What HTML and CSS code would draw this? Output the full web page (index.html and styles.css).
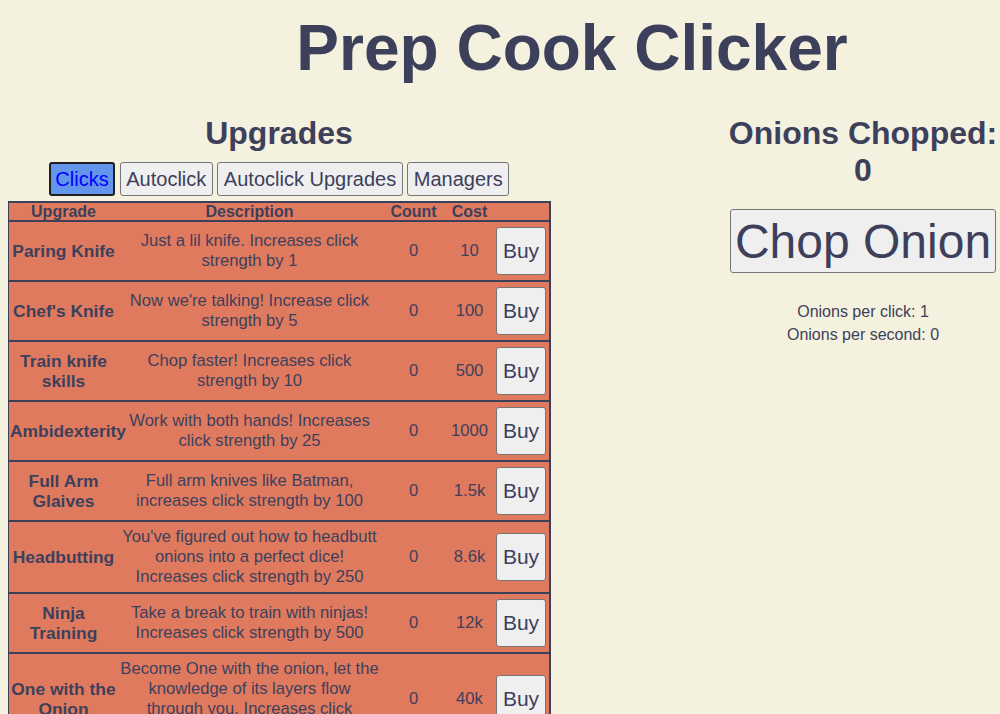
FILE: index.html
```html
<!DOCTYPE html>
<html lang="en">
<head>
<meta charset="utf-8">
<title>Prep Cook Clicker</title>
<link rel="stylesheet" href="styles.css">
</head>
<body>
<h1 class="title">Prep Cook Clicker</h1>
<div class="main">
  <section class="upgrades">
    <h2 class="heading">Upgrades</h2>
    <div class="tabs">
      <button class="tab active">Clicks</button>
      <button class="tab">Autoclick</button>
      <button class="tab">Autoclick Upgrades</button>
      <button class="tab">Managers</button>
    </div>
    <table class="table">
      <colgroup>
        <col class="c-name"><col class="c-desc"><col class="c-count"><col class="c-cost"><col class="c-buy">
      </colgroup>
      <thead>
        <tr><th>Upgrade</th><th>Description</th><th>Count</th><th>Cost</th><th></th></tr>
      </thead>
      <tbody>
        <tr><td class="name">Paring Knife</td><td class="desc">Just a lil knife. Increases click strength by 1</td><td class="num">0</td><td class="num">10</td><td class="buycell"><button class="buy">Buy</button></td></tr>
        <tr><td class="name">Chef's Knife</td><td class="desc">Now we're talking! Increase click strength by 5</td><td class="num">0</td><td class="num">100</td><td class="buycell"><button class="buy">Buy</button></td></tr>
        <tr><td class="name">Train knife skills</td><td class="desc">Chop faster! Increases click strength by 10</td><td class="num">0</td><td class="num">500</td><td class="buycell"><button class="buy">Buy</button></td></tr>
        <tr><td class="name">Ambidexterity</td><td class="desc">Work with both hands! Increases click strength by 25</td><td class="num">0</td><td class="num">1000</td><td class="buycell"><button class="buy">Buy</button></td></tr>
        <tr><td class="name">Full Arm Glaives</td><td class="desc">Full arm knives like Batman, increases click strength by 100</td><td class="num">0</td><td class="num">1.5k</td><td class="buycell"><button class="buy">Buy</button></td></tr>
        <tr><td class="name">Headbutting</td><td class="desc">You've figured out how to headbutt onions into a perfect dice! Increases click strength by 250</td><td class="num">0</td><td class="num">8.6k</td><td class="buycell"><button class="buy">Buy</button></td></tr>
        <tr><td class="name">Ninja Training</td><td class="desc">Take a break to train with ninjas! Increases click strength by 500</td><td class="num">0</td><td class="num">12k</td><td class="buycell"><button class="buy">Buy</button></td></tr>
        <tr><td class="name">One with the Onion</td><td class="desc">Become One with the onion, let the knowledge of its layers flow through you. Increases click strength by 1000</td><td class="num">0</td><td class="num">40k</td><td class="buycell"><button class="buy">Buy</button></td></tr>
      </tbody>
    </table>
  </section>
  <section class="clicker">
    <h2 class="heading">Onions Chopped: 0</h2>
    <button class="chop">Chop Onion</button>
    <div class="stats">
      <div>Onions per click: 1</div>
      <div>Onions per second: 0</div>
    </div>
  </section>
</div>
</body>
</html>
```
FILE: styles.css
```css
html, body {
  background: #f4f1de;
}
body {
  margin: 8px 0 8px 8px;
  color: #3d405b;
  font-family: "Liberation Sans", Arial, sans-serif;
  font-size: 16px;
}
.title {
  margin: 3px 0 0;
  padding-left: 136px;
  text-align: center;
  font-size: 64px;
  font-weight: bold;
}
.main {
  display: flex;
  justify-content: space-between;
  align-items: flex-start;
  padding-right: 2px;
}
.heading {
  margin: 30px 0 0;
  font-size: 32px;
  font-weight: bold;
  text-align: center;
}
.upgrades {
  width: 542px;
  display: flex;
  flex-direction: column;
}
.tabs {
  display: flex;
  justify-content: center;
  gap: 4.6px;
  margin-top: 10px;
}
.tab {
  font-family: inherit;
  font-size: 20px;
  color: #3d405b;
  background: #efefef;
  border: 1px solid #767676;
  border-radius: 3px;
  padding: 4.5px 5.5px;
  line-height: 23px;
}
.tab.active {
  background: #6495ed;
  color: #0000ff;
  border: 2px solid #1f1f1f;
  padding: 3.5px 4.5px;
}
.table {
  margin: 5px 0 0 -1px;
  width: 544px;
  table-layout: fixed;
  border-collapse: separate;
  border-spacing: 0;
  border: 2px solid #3d405b;
  background: #e07a5f;
  text-align: center;
}
.c-name { width: 109px; }
.c-desc { width: 263px; }
.c-count { width: 65px; }
.c-cost { width: 47px; }
.c-buy { width: 56px; }
.table th {
  padding: 0;
  font-size: 16px;
  line-height: 17px;
  font-weight: bold;
}
.table td {
  padding: 5px 1px;
  border-top: 2px solid #3d405b;
  vertical-align: middle;
  line-height: 20px;
  font-size: 16.6px;
}
.table td.name {
  font-weight: bold;
  font-size: 17.4px;
}
.table td.buycell {
  padding: 5px 0;
}
.buy {
  display: block;
  margin: 0 auto;
  width: 50px;
  height: 48px;
  padding: 0;
  font-family: inherit;
  font-size: 21px;
  color: #3d405b;
  background: #efefef;
  border: 1px solid #767676;
  border-radius: 3px;
}
.clicker {
  width: 270px;
  display: flex;
  flex-direction: column;
  align-items: center;
}
.chop {
  margin-top: 20px;
  font-family: inherit;
  font-size: 48px;
  color: #3d405b;
  background: #efefef;
  border: 1px solid #767676;
  border-radius: 3px;
  padding: 3.5px;
}
.stats {
  margin-top: 27px;
  line-height: 23px;
  text-align: center;
}
```
